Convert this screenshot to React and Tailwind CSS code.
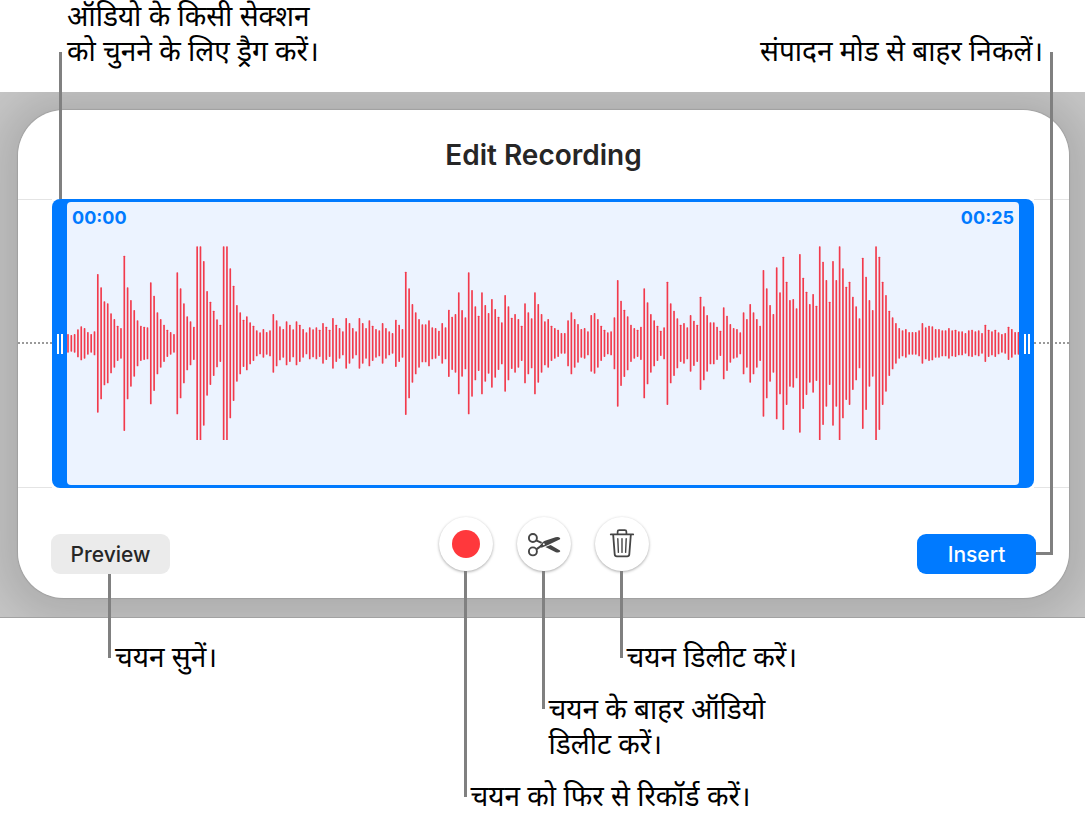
const PEAKS = [
  312, 315, 312, 298, 289, 294, 306, 312, 304, 132, 172, 214, 220, 250, 267, 287, 294, 77, 172, 210,
  240, 271, 287, 290, 292, 157, 197, 247, 267, 284, 299, 306, 312, 127, 175, 220, 259, 274, 290, 49,
  49, 93, 183, 215, 242, 268, 284, 49, 49, 115, 167, 225, 247, 269, 259, 277, 287, 301, 307, 297,
  306, 301, 252, 271, 289, 297, 274, 284, 298, 274, 284, 297, 307, 292, 298, 292, 299, 279, 290, 299,
  264, 284, 294, 304, 264, 279, 294, 304, 264, 279, 294, 271, 287, 297, 301, 279, 294, 304, 309, 269,
  284, 297, 125, 175, 222, 247, 267, 283, 283, 271, 292, 294, 302, 279, 292, 239, 260, 252, 187, 240,
  262, 127, 180, 229, 257, 187, 225, 249, 207, 237, 260, 277, 195, 229, 263, 252, 267, 287, 220, 247,
  265, 187, 222, 252, 274, 267, 287, 294, 299, 309, 309, 271, 247, 267, 282, 297, 294, 304, 255, 249,
  267, 287, 299, 307, 304, 262, 150, 212, 239, 259, 284, 294, 299, 290, 175, 217, 252, 271, 287, 302,
  292, 155, 220, 242, 265, 284, 279, 292, 255, 272, 284, 200, 229, 255, 277, 277, 290, 302, 232, 257,
  282, 294, 297, 307, 247, 267, 222, 247, 267, 287, 120, 175, 225, 252, 112, 187, 80, 155, 210, 207,
  235, 72, 143, 185, 222, 192, 227, 49, 95, 150, 215, 93, 150, 49, 115, 170, 155, 200, 229, 265,
  83, 140, 210, 240, 49, 80, 155, 195, 242, 262, 279, 294, 301, 297, 306, 306, 306, 301, 279, 292,
  287, 289, 297, 297, 301, 301, 294, 301, 299, 304, 304, 309, 301, 299, 304, 301, 309, 284, 299, 304,
  299, 307, 312, 309, 290, 297, 306, 306,
];

const MIDDLE = 340;
const PITCH = 9.935;

const LINE = "absolute bg-[#808080]";
const CAPTION = "text-[28px] leading-[35px] text-black";
const ROUND_BUTTON =
  "block size-[54px] rounded-full bg-white flex items-center justify-center shadow-[0_1px_3px_rgba(0,0,0,0.34)]";
const TEXT_BUTTON = "block h-[40px] w-[119px] rounded-[9px] pt-[2px] text-[21px] font-medium";

function Waveform() {
  return (
    <svg
      className="block h-[194px] w-full"
      viewBox="0 0 2856 582"
      preserveAspectRatio="none"
      role="img"
      aria-label="Waveform"
    >
      {PEAKS.map((peak, i) => {
        const half = MIDDLE - peak;
        return (
          <rect
            key={i}
            x={i * PITCH + 0.5}
            y={292 - half}
            width="5"
            height={half * 2}
            rx="2"
            fill="#f23a4c"
          />
        );
      })}
    </svg>
  );
}

function Grip() {
  return (
    <div className="flex w-[15px] shrink-0 items-center justify-center gap-[2px]">
      <span className="h-[20px] w-[2px] bg-white" />
      <span className="h-[20px] w-[2px] bg-white" />
    </div>
  );
}

function ScissorsIcon() {
  return (
    <svg className="size-[54px]" viewBox="0 0 54 54" fill="none" aria-hidden="true">
      <g stroke="#454545" strokeWidth="1.9">
        <circle cx="15.9" cy="21" r="4" />
        <circle cx="15.9" cy="34.4" r="4" />
        <path d="M19.2 23.3 L24.6 25.8 M19.2 32.3 L25 28.4" strokeWidth="2" />
      </g>
      <path
        d="M22.8 28.8 L25.4 25.6 Q26.4 24.4 28 23.8 L38.5 20.2 Q41.8 19.4 43.2 21.2 L43 22.3 L31 28 L24.5 30.8 Z"
        fill="#454545"
      />
      <path
        d="M28.4 30 L33.6 28 L43 33.6 L43.2 34.6 Q41.5 36.2 38.8 35.2 Z"
        fill="#454545"
      />
      <circle cx="26.8" cy="27.2" r="1" fill="#ffffff" />
    </svg>
  );
}

function TrashIcon() {
  return (
    <svg
      className="size-[54px]"
      viewBox="0 0 54 54"
      fill="none"
      stroke="#454545"
      strokeLinecap="round"
      strokeLinejoin="round"
      aria-hidden="true"
    >
      <path d="M15.8 17.4 H38.2" strokeWidth="1.8" />
      <path d="M22.6 17 V14.8 Q22.6 13.2 24.2 13.2 H29.8 Q31.4 13.2 31.4 14.8 V17" strokeWidth="1.7" />
      <path d="M18.2 18 L19.7 37.4 Q19.9 39.3 21.8 39.3 H32.2 Q34.1 39.3 34.3 37.4 L35.8 18" strokeWidth="1.8" />
      <path d="M22.8 21.6 L23.4 35.4 M27 21.6 V35.4 M31.2 21.6 L30.6 35.4" strokeWidth="1.4" />
    </svg>
  );
}

export default function App() {
  return (
    <main
      lang="hi"
      className="min-h-screen overflow-x-hidden bg-white font-['Kohinoor_Devanagari','Noto_Sans_Devanagari','Noto_Sans',sans-serif]"
    >
      <div className="flex h-[92px] items-end justify-between pr-[44px] pb-[20px] pl-[67px]">
        <p className={CAPTION}>
          ऑडियो के किसी सेक्शन
          <br />
          को चुनने के लिए ड्रैग करें।
        </p>
        <p className={CAPTION}>संपादन मोड से बाहर निकलें।</p>
      </div>

      <div className="relative mr-[2px] border-b border-[#a2a2a2] bg-[#c6c6c6] pt-[18px] pr-[16px] pb-[19px] pl-[18px] font-['Inter',sans-serif]">
        <div className="absolute inset-0 overflow-hidden pt-[18px] pr-[16px] pb-[19px] pl-[18px]" aria-hidden="true">
          <div className="h-full rounded-[46px] shadow-[0_0_1px_1px_rgba(0,0,0,0.1),0_3px_40px_20px_rgba(0,0,0,0.12)]" />
        </div>

        <section lang="en" className="relative rounded-[46px] bg-white">
          <h1 className="flex h-[89px] items-center justify-center text-[28px] font-semibold text-[#262626]">
            Edit Recording
          </h1>

          <div className="relative flex items-center">
            <div className="h-[289px] w-[34px] shrink-0 border-y border-[#e4e4e4] pt-[142px]">
              <div className="border-t-2 border-dotted border-[#9a9a9a]" />
            </div>
            <div className="relative flex h-[289px] min-w-0 flex-1 rounded-[8px] bg-[#007aff]">
              <span className={`${LINE} bottom-full left-[7px] h-[147px] w-[3px]`} />
              <Grip />
              <div className="my-[3px] flex min-w-0 flex-1 flex-col rounded-[4px] bg-[#ecf3ff]">
                <div className="flex h-[44px] justify-between px-[5px] pt-[4px] text-[18px] leading-[24px] font-bold text-[#007aff]">
                  <time>00:00</time>
                  <time>00:25</time>
                </div>
                <Waveform />
              </div>
              <Grip />
            </div>
            <div className="h-[289px] w-[35px] shrink-0 border-y border-[#e4e4e4] pt-[142px]">
              <div className="border-t-2 border-dotted border-[#9a9a9a]" />
            </div>
          </div>

          <div className="flex items-end justify-between pt-[29px] pr-[33px] pb-[24px] pl-[33px]">
            <div className="relative">
              <button type="button" className={`${TEXT_BUTTON} bg-[#ebebeb] text-[#262626]`}>
                Preview
              </button>
              <span className={`${LINE} top-full left-[57px] h-[84px] w-[3px]`} />
            </div>

            <div className="mb-[3px] flex gap-[24px]">
              <div className="relative">
                <button type="button" aria-label="Record" className={ROUND_BUTTON}>
                  <span className="size-[28px] rounded-full bg-[#ff383c]" />
                </button>
                <span className={`${LINE} top-full left-[25px] h-[226px] w-[3px]`} />
              </div>
              <div className="relative">
                <button type="button" aria-label="Trim" className={ROUND_BUTTON}>
                  <ScissorsIcon />
                </button>
                <span className={`${LINE} top-full left-[25px] h-[138px] w-[3px]`} />
              </div>
              <div className="relative">
                <button type="button" aria-label="Delete" className={ROUND_BUTTON}>
                  <TrashIcon />
                </button>
                <span className={`${LINE} top-full left-[25px] h-[87px] w-[3px]`} />
              </div>
            </div>

            <div className="relative">
              <button type="button" className={`${TEXT_BUTTON} bg-[#007aff] text-white`}>
                Insert
              </button>
              <span className="absolute bottom-[19px] left-full h-[503px] w-[17px] border-r-[3px] border-b-[3px] border-[#808080]" />
            </div>
          </div>
        </section>
      </div>

      <div className="grid grid-cols-2 gap-y-[17px] pt-[25px]">
        <p className={`${CAPTION} pl-[115px]`}>चयन सुनें।</p>
        <p className={`${CAPTION} pl-[83px]`}>चयन डिलीट करें।</p>
        <p className={`${CAPTION} col-start-2 pl-[5px]`}>
          चयन के बाहर ऑडियो
          <br />
          डिलीट करें।
        </p>
        <p className={`${CAPTION} col-start-2 -ml-[73px]`}>चयन को फिर से रिकॉर्ड करें।</p>
      </div>
    </main>
  );
}
